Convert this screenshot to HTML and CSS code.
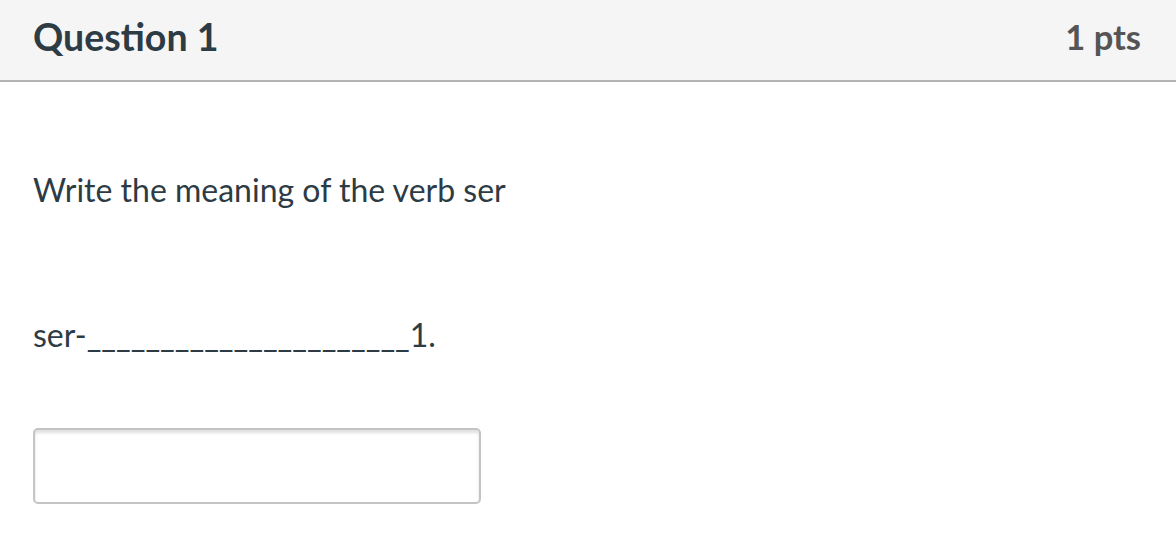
FILE: index.html
```html
<!DOCTYPE html>
<html>
<head>
<meta charset="utf-8">
<link rel="stylesheet" href="styles.css">
</head>
<body>
<div class="question">
  <div class="header">
    <div class="title">Question 1</div>
    <div class="pts">1 pts</div>
  </div>
  <div class="content">
    <p class="prompt">Write the meaning of the verb ser</p>
    <p class="line">ser-______________________1.</p>
    <div class="answer"><input class="field" type="text"></div>
  </div>
</div>
</body>
</html>
```
FILE: styles.css
```css
html, body {
  margin: 0;
  padding: 0;
  background: #ffffff;
}
body {
  font-family: Lato, "Noto Sans", sans-serif;
  color: #2d3b45;
}
.header {
  display: flex;
  justify-content: space-between;
  align-items: center;
  box-sizing: border-box;
  height: 82px;
  padding: 0 35px 6px 33px;
  background: #f5f5f5;
  border-bottom: 2px solid #b3b3b3;
}
.title {
  font-weight: 700;
  font-size: 37.5px;
  line-height: 44px;
  color: #2d3b45;
}
.pts {
  font-weight: 700;
  font-size: 34.5px;
  line-height: 44px;
  color: #555555;
}
.content {
  padding: 0 33px;
}
.prompt {
  margin: 88px 0 0;
  font-size: 32px;
  line-height: 40px;
}
.line {
  margin: 105px 0 0;
  font-size: 32px;
  line-height: 40px;
}
.answer {
  margin-top: 73px;
}
.field {
  display: block;
  box-sizing: border-box;
  width: 448px;
  height: 76px;
  margin: 0;
  border: 2px solid #c4c4c4;
  border-radius: 5px;
  background: #fff;
  box-shadow: inset 0 3px 3px rgba(0,0,0,0.12);
  outline: none;
}
```
